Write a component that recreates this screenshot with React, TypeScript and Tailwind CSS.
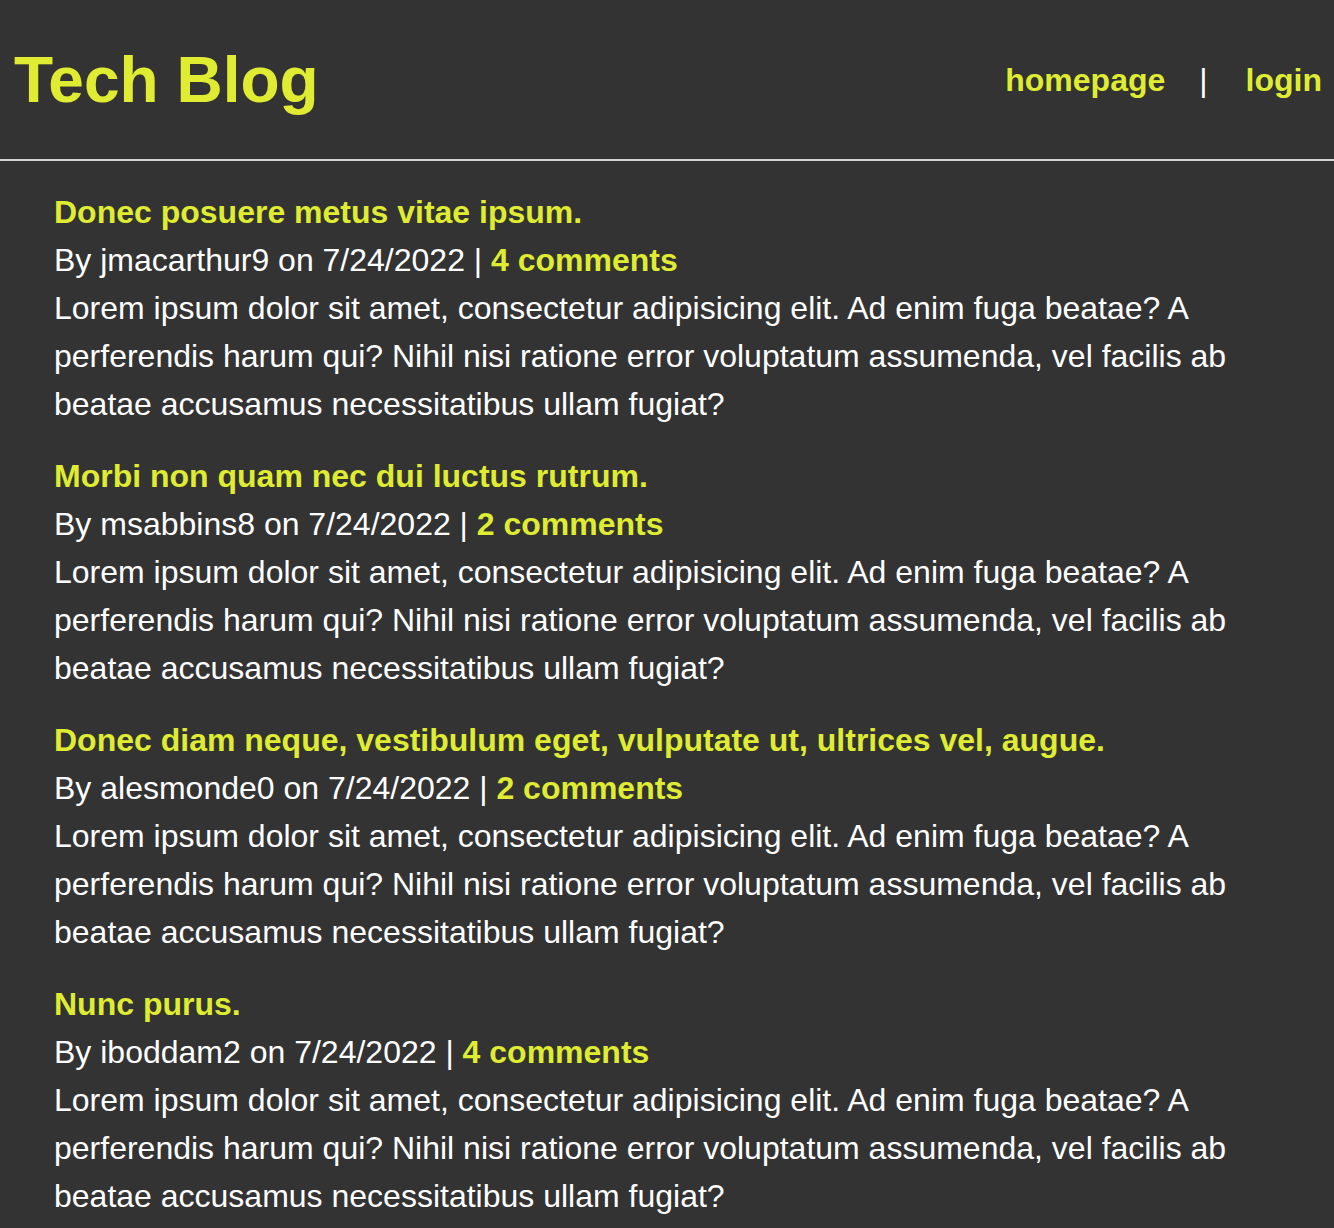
import React from "react";

const posts = [
  { title: "Donec posuere metus vitae ipsum.", user: "jmacarthur9", comments: 4 },
  { title: "Morbi non quam nec dui luctus rutrum.", user: "msabbins8", comments: 2 },
  { title: "Donec diam neque, vestibulum eget, vulputate ut, ultrices vel, augue.", user: "alesmonde0", comments: 2 },
  { title: "Nunc purus.", user: "iboddam2", comments: 4 },
];

const body =
  "Lorem ipsum dolor sit amet, consectetur adipisicing elit. Ad enim fuga beatae? A perferendis harum qui? Nihil nisi ratione error voluptatum assumenda, vel facilis ab beatae accusamus necessitatibus ullam fugiat?";

export default function App() {
  return (
    <div
      className="min-h-[1228px] bg-[#333333] text-white"
      style={{ fontFamily: '"Liberation Sans", Arial, Helvetica, sans-serif' }}
    >
      <header className="flex items-center justify-between pl-[14px] pr-3 pt-8 pb-[31px] border-b-2 border-[#d4d4d4]">
        <h1 className="text-[64px] leading-[96px] font-bold text-[#dfec31]">Tech Blog</h1>
        <nav className="flex items-center text-[32px] leading-[48px]">
          <a className="font-bold text-[#dfec31]" href="#">homepage</a>
          <span className="ml-[34px] mr-[38px] text-white">|</span>
          <a className="font-bold text-[#dfec31]" href="#">login</a>
        </nav>
      </header>
      <main className="pt-[27px] pl-[54px] pr-[52px] flex flex-col gap-6">
        {posts.map((p) => (
          <article key={p.title} className="text-[32px] leading-[48px]">
            <h2 className="font-bold text-[#dfec31]">{p.title}</h2>
            <p>
              By {p.user} on 7/24/2022 |{" "}
              <a href="#" className="font-bold text-[#dfec31]">
                {p.comments} comments
              </a>
            </p>
            <p>{body}</p>
          </article>
        ))}
      </main>
    </div>
  );
}
